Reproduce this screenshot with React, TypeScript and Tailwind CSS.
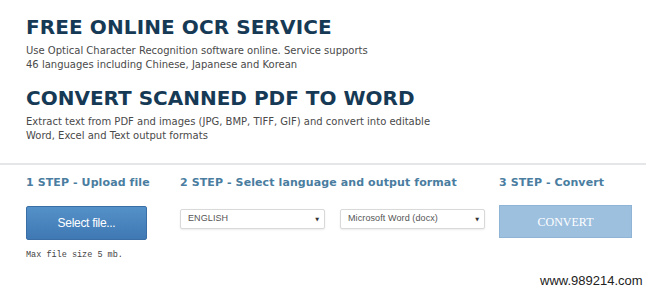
import React from "react";

const verdana = { fontFamily: "Verdana, 'DejaVu Sans', sans-serif" };

function FakeSelect({ label, width }: { label: string; width: string }) {
  return (
    <div
      className={`${width} h-[20px] mt-[2px] flex items-center justify-between border border-[#d9d9d9] rounded-[2px] bg-white shadow-[0_1px_2px_rgba(0,0,0,0.08)] pl-[7px] pr-[5px]`}
    >
      <span className="text-[9px] text-[#555] font-['Liberation_Sans',Arial,sans-serif] tracking-[0.1px]">
        {label}
      </span>
      <span className="text-[5px] text-[#333] leading-none">▼</span>
    </div>
  );
}

export default function App() {
  return (
    <div className="w-[646px] h-[292px] bg-white relative overflow-hidden" style={verdana}>
      <div className="pl-[26px] pt-[15px]">
        <h1 className="text-[20px] font-bold leading-[24px] text-[#163a55] tracking-[0.1px]">
          FREE ONLINE OCR SERVICE
        </h1>
        <p className="mt-[5px] text-[10px] leading-[14px] text-[#4a4a4a]">
          Use Optical Character Recognition software online. Service supports
          <br />
          46 languages including Chinese, Japanese and Korean
        </p>
        <h1 className="mt-[14px] text-[20px] font-bold leading-[24px] text-[#163a55]">
          CONVERT SCANNED PDF TO WORD
        </h1>
        <p className="mt-[5px] text-[10px] leading-[14px] text-[#4a4a4a]">
          Extract text from PDF and images (JPG, BMP, TIFF, GIF) and convert into editable
          <br />
          Word, Excel and Text output formats
        </p>
      </div>
      <div className="mt-[20px] h-[2px] bg-[#e4e6e8]" />
      <div className="flex pl-[26px] pt-[10px]">
        <div className="w-[154px]">
          <div className="text-[11px] font-bold text-[#4a7d9f] leading-[16px] tracking-[0.1px]">1 STEP - Upload file</div>
          <div className="mt-[15px] w-[121px] h-[34px] rounded-[2px] bg-gradient-to-b from-[#5591c9] to-[#3f78b3] border border-[#3a6fa6] flex items-center justify-center text-white text-[12px] font-['Liberation_Sans',Arial,sans-serif] tracking-[-0.3px]">
            Select file...
          </div>
          <div className="mt-[9px] text-[8.5px] text-[#444] font-['Liberation_Mono','Courier_New',monospace]">
            Max file size 5 mb.
          </div>
        </div>
        <div className="w-[319px]">
          <div className="text-[11px] font-bold text-[#4a7d9f] leading-[16px] tracking-[0.1px]">
            2 STEP - Select language and output format
          </div>
          <div className="mt-[16px] flex gap-[15px]">
            <FakeSelect label="ENGLISH" width="w-[145px]" />
            <FakeSelect label="Microsoft Word (docx)" width="w-[145px]" />
          </div>
        </div>
        <div>
          <div className="text-[11px] font-bold text-[#4a7d9f] leading-[16px] tracking-[0.1px]">3 STEP - Convert</div>
          <div className="mt-[14px] w-[133px] h-[33px] bg-[#9dc0df] border border-[#8fb4d6] flex items-center justify-center text-white text-[12px] font-['Liberation_Serif','Times_New_Roman',serif]">
            CONVERT
          </div>
        </div>
      </div>
      <div className="absolute left-[540px] top-[271px] text-[13px] text-[#222] font-['Liberation_Sans',Arial,sans-serif]">
        www.989214.com
      </div>
    </div>
  );
}
